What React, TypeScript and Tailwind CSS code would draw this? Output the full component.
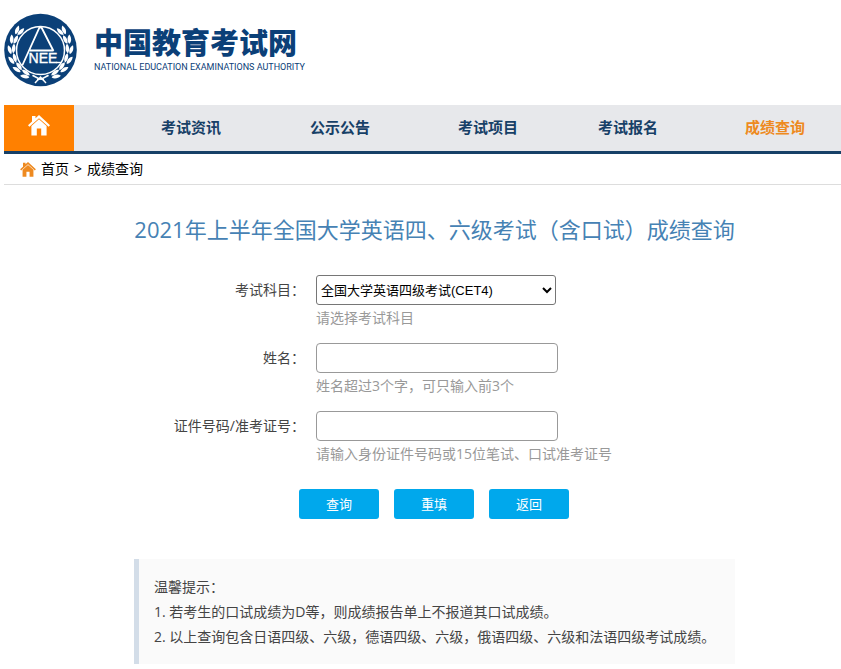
const navItems = [
  { label: "考试资讯", active: false },
  { label: "公示公告", active: false },
  { label: "考试项目", active: false },
  { label: "考试报名", active: false },
  { label: "成绩查询", active: true },
];

// degrees from the bottom of the wreath, going up one side
const leafAngles = [26, 46, 66, 86, 106, 126];

const WreathSide = () => (
  <g>
    {leafAngles.map((angle) => (
      <g key={angle} transform={`rotate(${-angle} 40.5 41)`}>
        <path d="M39 68.5c2.5-3 6.5-3.4 9.5-1.5c-2.4 2.8-6.5 3.2-9.5 1.5z" />
        <path d="M38.5 70.5c3-1.6 7-.8 9 2.6c-3.6 1.2-7.4 .4-9-2.6z" />
      </g>
    ))}
    <path d="M37 70Q42 69.5 48 65.5L49 67Q43 71 37 71.5z" />
  </g>
);

const Logo = () => (
  <svg viewBox="4 4 73 74" className="h-[74px] w-[73px]" role="img" aria-label="NEEA">
    <circle cx="40.5" cy="41" r="36.3" fill="#0b4078" />
    <g fill="#fff">
      <WreathSide />
      <g transform="matrix(-1 0 0 1 81 0)">
        <WreathSide />
      </g>
    </g>
    <circle cx="40.5" cy="41.5" r="24" fill="#0b4078" stroke="#fff" strokeWidth="1.5" />
    <path
      d="M22.5 56L39.5 18.5H41.5L53.5 42M30 41.5H53.5"
      fill="none"
      stroke="#fff"
      strokeWidth="1.8"
    />
    <path d="M56 53.5H61" stroke="#fff" strokeWidth="1.4" />
    <text
      x="43"
      y="54"
      textAnchor="middle"
      fill="#fff"
      fontSize="14"
      fontFamily="Liberation Sans, sans-serif"
      stroke="#fff"
      strokeWidth="0.4"
    >
      NEE
    </text>
    <path d="M35 74L40.5 68L46 74" fill="none" stroke="#fff" strokeWidth="1.5" />
  </svg>
);

const HomeIcon = ({ className }: { className: string }) => (
  <svg viewBox="0 0 22 21" fill="currentColor" className={className} aria-hidden="true">
    <path d="M11 0L7.5 3.2V1H4V6.5L0 10.2L1.4 11.8L11 3.3L20.6 11.8L22 10.2z" />
    <path d="M11 4.2L3.4 11V20.5H8.8V13.5H13.2V20.5H18.6V11z" />
  </svg>
);

const inputClass =
  "block h-[30px] w-[242px] rounded border border-[#999] bg-white px-2 text-[13px] text-black";
const buttonClass =
  "h-[30px] w-20 rounded-[3px] bg-[#00a8ec] text-[13px] text-white hover:bg-[#0095d2]";
const labelClass = "h-[30px] text-right leading-[30px]";
const hintClass = "h-[38px] leading-[26px] text-[#999]";

const Header = () => (
  <header className="flex h-[105px] items-start gap-[17px] pt-[13px]">
    <Logo />
    <div className="pt-3 text-[#0b4078]">
      <div className="text-[29px] leading-[36px] font-black">中国教育考试网</div>
      <div className="font-['Roboto',sans-serif] text-[9px] leading-3 whitespace-nowrap">
        NATIONAL EDUCATION EXAMINATIONS AUTHORITY
      </div>
    </div>
  </header>
);

const Nav = () => (
  <nav className="flex h-[49px] border-b-3 border-[#174067] bg-[#e7e8eb]">
    <a
      href="#"
      aria-label="首页"
      className="flex w-[70px] shrink-0 justify-center bg-[#ff8000] pt-[10px] text-white"
    >
      <HomeIcon className="h-[21px] w-[22px]" />
    </a>
    <ul className="grid grow grid-cols-[149fr_148fr_140fr_147fr_96fr] items-center pl-[87px] text-[15px] font-bold text-[#174067]">
      {navItems.map((item) => (
        <li key={item.label}>
          <a href="#" className={item.active ? "text-[#ee8a20]" : ""}>
            {item.label}
          </a>
        </li>
      ))}
    </ul>
  </nav>
);

const QueryForm = () => (
  <form onSubmit={(e) => e.preventDefault()}>
    <div className="grid grid-cols-[171px_1fr] gap-x-[11px]">
      <label htmlFor="subject" className={labelClass}>
        考试科目：
      </label>
      <div>
        <select
          id="subject"
          className="block h-[30px] w-60 rounded-[3px] border border-[#767676] bg-white font-['Liberation_Sans','Noto_Sans_CJK_SC',sans-serif] text-[13px] text-black"
        >
          <option>全国大学英语四级考试(CET4)</option>
          <option>全国大学英语六级考试(CET6)</option>
        </select>
        <p className={hintClass}>请选择考试科目</p>
      </div>
      <label htmlFor="name" className={labelClass}>
        姓名：
      </label>
      <div>
        <input id="name" type="text" className={inputClass} />
        <p className={hintClass}>姓名超过3个字，可只输入前3个</p>
      </div>
      <label htmlFor="ticket" className={labelClass}>
        证件号码/准考证号：
      </label>
      <div>
        <input id="ticket" type="text" className={inputClass} />
        <p className={hintClass}>请输入身份证件号码或15位笔试、口试准考证号</p>
      </div>
    </div>
    <div className="mt-[10px] flex gap-[15px] pl-[165px]">
      <button type="submit" className={buttonClass}>
        查询
      </button>
      <button type="reset" className={buttonClass}>
        重填
      </button>
      <button type="button" className={buttonClass}>
        返回
      </button>
    </div>
  </form>
);

export default function App() {
  return (
    <div className="bg-white pl-1 font-['Open_Sans','Noto_Sans_CJK_SC',sans-serif] text-sm text-[#444]">
      <Header />
      <Nav />
      <div className="flex h-[31px] items-center gap-[5px] border-b border-[#ddd] pl-4 text-black">
        <HomeIcon className="h-[15px] w-4 text-[#ee8a20]" />
        <a href="#">首页</a>
        <span>&gt;</span>
        <span>成绩查询</span>
      </div>
      <main className="pr-[106px] pb-[5px] pl-[130px]">
        <h1 className="pt-[29px] pb-[31px] text-center text-[22px] leading-[30px] whitespace-nowrap text-[#4682b4]">
          2021年上半年全国大学英语四、六级考试（含口试）成绩查询
        </h1>
        <QueryForm />
        <section className="mt-10 border-l-5 border-[#d3dde8] bg-[#fafafa] py-[15px] pl-[15px] leading-[25px]">
          <p>温馨提示：</p>
          <p>1. 若考生的口试成绩为D等，则成绩报告单上不报道其口试成绩。</p>
          <p>2. 以上查询包含日语四级、六级，德语四级、六级，俄语四级、六级和法语四级考试成绩。</p>
        </section>
      </main>
    </div>
  );
}
